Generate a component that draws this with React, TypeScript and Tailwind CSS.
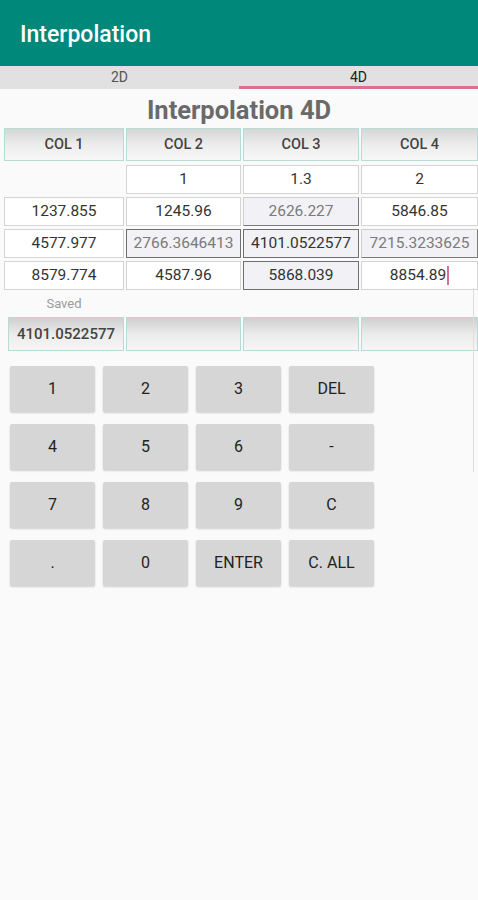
import React from "react";

const font = { fontFamily: "Roboto, 'Noto Sans', sans-serif" };

function HeadCell({ children }: { children?: React.ReactNode }) {
  return (
    <div className="h-[33px] flex items-center justify-center border border-[#b5ddd5] bg-gradient-to-b from-[#d6d6d6] via-[#ececec] to-[#f7f7f7] text-[14.5px] font-medium text-[#444]">
      {children}
    </div>
  );
}

function InCell({ children, cursor }: { children?: React.ReactNode; cursor?: boolean }) {
  return (
    <div className="h-[29px] flex items-center justify-center border border-[#d4d4d4] bg-white text-[15.5px] text-[#333]">
      {children}
      {cursor && <span className="inline-block w-[2px] h-[19px] bg-[#d5728f] ml-[1px]" />}
    </div>
  );
}

function OutCell({ children, dark, full }: { children?: React.ReactNode; dark?: boolean; full?: boolean }) {
  return (
    <div
      className={
        "h-[29px] flex items-center justify-center bg-[#f1f1f6] text-[15.5px] border " +
        (full
          ? "border-[#6f6f6f] "
          : "border-t-[#cfcfcf] border-l-[#cfcfcf] border-r-[#7a7a7a] border-b-[#7a7a7a] ") +
        (dark ? "text-[#333]" : "text-[#7a7a7a]")
      }
    >
      {children}
    </div>
  );
}

function SavedCell({ children }: { children?: React.ReactNode }) {
  return (
    <div className="h-[34px] flex items-center justify-center border border-[#b5ddd5] bg-gradient-to-b from-[#cfcfcf] via-[#ebebeb] to-[#f6f6f6] text-[15px] font-medium text-[#444]">
      {children}
    </div>
  );
}

function Key({ label }: { label: string }) {
  return (
    <div className="h-[46px] flex items-center justify-center bg-[#d6d6d6] rounded-[2px] shadow-[0_1px_2px_rgba(0,0,0,0.18)] text-[16px] text-[#222]">
      {label}
    </div>
  );
}

export default function App() {
  const keys = ["1", "2", "3", "DEL", "4", "5", "6", "-", "7", "8", "9", "C", ".", "0", "ENTER", "C. ALL"];
  return (
    <div className="relative w-[478px] h-[900px] bg-[#fafafa] overflow-hidden" style={font}>
      <div className="h-[66px] bg-[#00897b] flex items-center pl-[20px] pt-[4px]">
        <span className="text-white text-[23px] font-medium">Interpolation</span>
      </div>
      <div className="h-[23px] bg-[#e1e1e1] flex">
        <div className="flex-1 flex items-center justify-center text-[14px] text-[#555]">2D</div>
        <div className="flex-1 relative flex items-center justify-center text-[14px] text-[#222]">
          4D
          <div className="absolute left-0 right-0 bottom-0 h-[3px] bg-[#d5728f]" />
        </div>
      </div>
      <div className="h-[39px] flex items-center justify-center pt-[3px]">
        <span className="text-[25.5px] font-bold text-[#6a6a6a]">Interpolation 4D</span>
      </div>
      <div className="grid grid-cols-[120px_115px_116px_117px] gap-x-[2px] pl-[4px] mb-[4px]">
        <HeadCell>COL 1</HeadCell>
        <HeadCell>COL 2</HeadCell>
        <HeadCell>COL 3</HeadCell>
        <HeadCell>COL 4</HeadCell>
      </div>
      <div className="grid grid-cols-[120px_115px_116px_117px] gap-x-[2px] gap-y-[3px] pl-[4px]">
        <div className="h-[29px]" />
        <InCell>1</InCell>
        <InCell>1.3</InCell>
        <InCell>2</InCell>
        <InCell>1237.855</InCell>
        <InCell>1245.96</InCell>
        <OutCell>2626.227</OutCell>
        <InCell>5846.85</InCell>
        <InCell>4577.977</InCell>
        <OutCell full>2766.3646413</OutCell>
        <OutCell full dark>4101.0522577</OutCell>
        <OutCell>7215.3233625</OutCell>
        <InCell>8579.774</InCell>
        <InCell>4587.96</InCell>
        <OutCell full dark>5868.039</OutCell>
        <InCell cursor>8854.89</InCell>
      </div>
      <div className="pl-[4px] mt-[4px]">
        <div className="w-[120px] text-center text-[13px] text-[#9a9a9a] leading-[20px]">Saved</div>
      </div>
      <div className="grid grid-cols-[116px_115px_116px_117px] gap-x-[2px] pl-[8px] mt-[3px]">
        <SavedCell>4101.0522577</SavedCell>
        <SavedCell />
        <SavedCell />
        <SavedCell />
      </div>
      <div className="grid grid-cols-[85px_85px_85px_85px] gap-x-[8px] gap-y-[12px] pl-[10px] mt-[15px]">
        {keys.map((k) => (
          <Key key={k} label={k} />
        ))}
      </div>
      <div className="absolute left-[473px] top-[288px] w-px h-[184px] bg-[#dedede]" />
    </div>
  );
}
